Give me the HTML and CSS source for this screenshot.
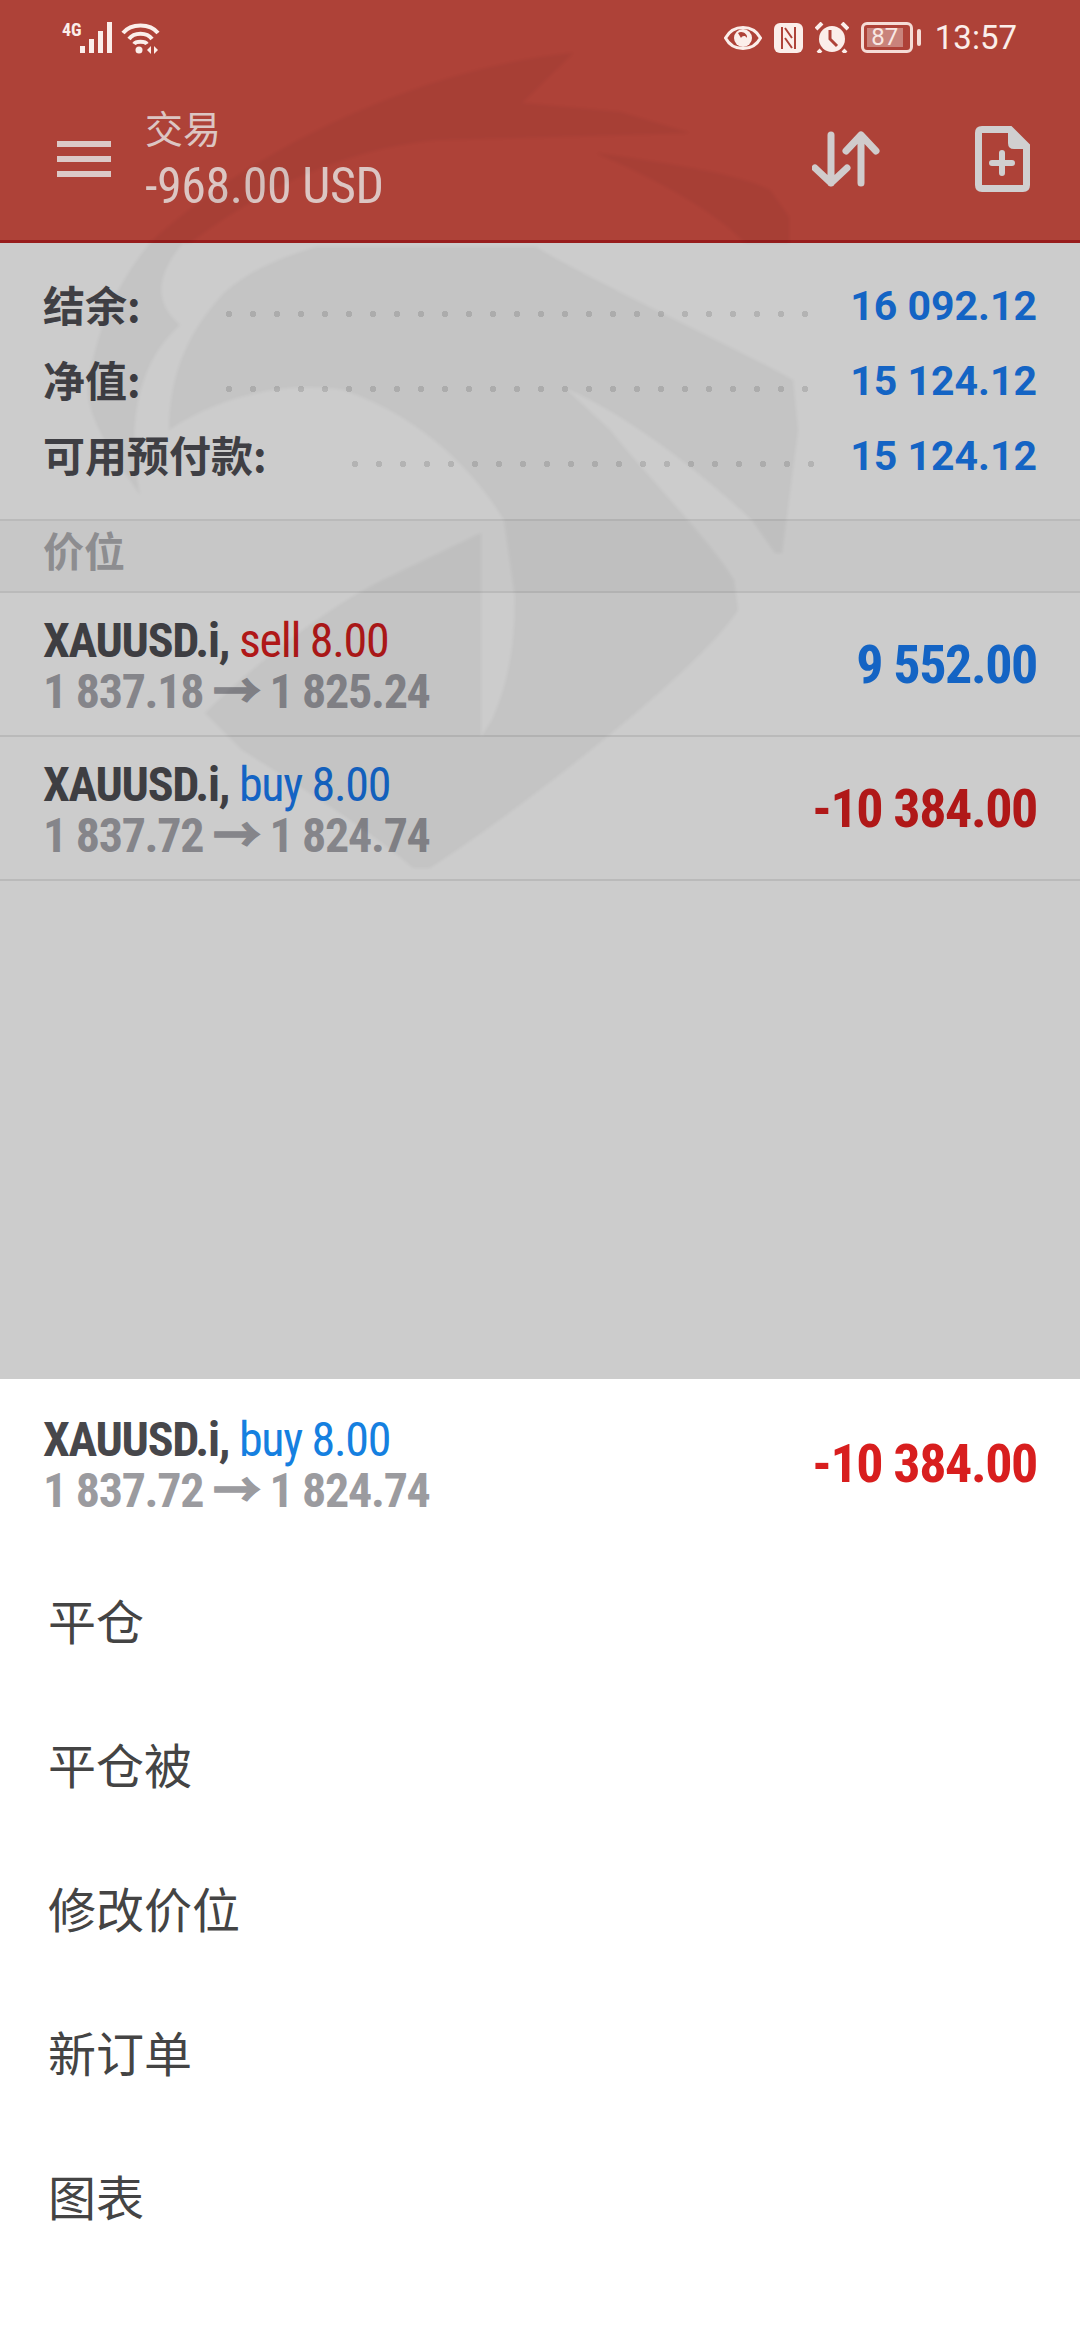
FILE: index.html
```html
<!DOCTYPE html>
<html lang="zh">
<head>
    <meta charset="UTF-8">
    <meta name="viewport" content="width=device-width, initial-scale=1.0">
    <title>交易</title>
    <link rel="stylesheet" href="styles.css">
</head>
<body>
    <div class="trade">
        <header class="top">
            <div class="status">
                <div class="status-left">
                    <span class="net">4G</span>
                    <svg class="ic-signal" width="32" height="31" viewBox="0 0 32 31" fill="#fbeeea">
                        <rect x="0" y="24" width="5" height="7"/>
                        <rect x="9" y="17" width="5" height="14"/>
                        <rect x="18" y="9" width="5" height="22"/>
                        <rect x="27" y="0" width="5" height="31"/>
                    </svg>
                    <svg class="ic-wifi" width="39" height="32" viewBox="0 0 39 32" fill="none" stroke="#fbeeea" stroke-width="4">
                        <path d="M2 11C10 1 29 1 37 11"/>
                        <path d="M8 17C13 10 26 10 31 17"/>
                        <path d="M13 22C15 19 24 19 26 22"/>
                        <circle cx="18" cy="28" r="3.500" fill="#fbeeea" stroke="none"/>
                        <path d="M30 24L26 28L30 32ZM33 24L37 28L33 32Z" fill="#fbeeea" stroke="none"/>
                    </svg>
                </div>
                <div class="status-right">
                    <svg width="38" height="26" viewBox="0 0 38 26">
                        <path d="M1.500 13C9 -1 29 -1 36.500 13C29 27 9 27 1.500 13Z" fill="none" stroke="#fbeeea" stroke-width="3"/>
                        <circle cx="19" cy="13" r="9" fill="#fbeeea"/>
                        <path d="M14 8C18 5 24 9 23 13C21 10 18 11 17 13Z" fill="#ae4238"/>
                    </svg>
                    <svg width="29" height="30" viewBox="0 0 29 30">
                        <rect width="29" height="30" rx="6" fill="#fbeeea"/>
                        <path d="M8 4V26M21 4V26M11 5L18 15M11 15L18 25" fill="none" stroke="#ae4238" stroke-width="2"/>
                    </svg>
                    <svg width="34" height="31" viewBox="0 0 34 31">
                        <circle cx="17" cy="17" r="13" fill="#fbeeea"/>
                        <path d="M1 7L7 1M33 7L27 1M6 28L3 31M28 28L31 31" stroke="#fbeeea" stroke-width="4"/>
                        <path d="M15 8V17L22 24" fill="none" stroke="#ae4238" stroke-width="3"/>
                    </svg>
                    <div class="battery">
                        <div class="battery-box">
                            <div class="battery-fill"></div>
                            <span class="battery-num">87</span>
                        </div>
                        <div class="battery-nub"></div>
                    </div>
                    <span class="clock">13:57</span>
                </div>
            </div>
            <div class="toolbar">
                <svg class="ic-menu" width="54" height="36" viewBox="0 0 54 36" fill="#dcc9c7">
                    <rect width="54" height="6"/>
                    <rect y="15" width="54" height="6"/>
                    <rect y="30" width="54" height="6"/>
                </svg>
                <div class="title">
                    <div class="title-name">交易</div>
                    <div class="title-sum">-968.00 USD</div>
                </div>
                <svg class="ic-sort" width="68" height="56" viewBox="0 0 68 56" fill="none" stroke="#d0cccc" stroke-width="7" stroke-linecap="round" stroke-linejoin="round">
                    <path d="M19 4V52M3 37L19 52L35 37"/>
                    <path d="M49 52V4M34 20L49 4L64 20"/>
                </svg>
                <svg class="ic-new" width="55" height="66" viewBox="0 0 55 66">
                    <path d="M3.500 7Q3.500 3.500 7 3.500H35L51.500 20V59Q51.500 62.500 48 62.500H7Q3.500 62.500 3.500 59Z" fill="none" stroke="#d0cfd0" stroke-width="7"/>
                    <path d="M33 2L53 21V23H39Q33 23 33 17Z" fill="#d0cfd0"/>
                    <path d="M27 27V47M17 37H37" fill="none" stroke="#d0cfd0" stroke-width="6" stroke-linecap="round"/>
                </svg>
            </div>
        </header>

        <section class="balance">
            <div class="bal-row">
                <span class="bal-label">结余:</span>
                <span class="dots"></span>
                <span class="bal-value">16 092.12</span>
            </div>
            <div class="bal-row">
                <span class="bal-label">净值:</span>
                <span class="dots"></span>
                <span class="bal-value">15 124.12</span>
            </div>
            <div class="bal-row">
                <span class="bal-label">可用预付款:</span>
                <span class="dots"></span>
                <span class="bal-value">15 124.12</span>
            </div>
        </section>

        <div class="section-head">价位</div>

        <div class="pos">
            <div class="pos-text">
                <div class="pos-line"><b>XAUUSD.i,</b> <span class="sell">sell 8.00</span></div>
                <div class="pos-price">1 837.18 <span class="arrow">→</span> 1 825.24</div>
            </div>
            <div class="pos-profit plus">9 552.00</div>
        </div>
        <div class="pos">
            <div class="pos-text">
                <div class="pos-line"><b>XAUUSD.i,</b> <span class="buy">buy 8.00</span></div>
                <div class="pos-price">1 837.72 <span class="arrow">→</span> 1 824.74</div>
            </div>
            <div class="pos-profit minus">-10 384.00</div>
        </div>

        <!-- logo watermark, sits over the whole upper part -->
        <svg class="mark" width="1080" height="1379" viewBox="0 0 1080 1379">
            <path d="M573 53L522 103L620 112L690 133L435 140C340 150 260 190 190 243H150C250 150 420 68 573 53Z"/>
            <path d="M596 153C680 165 740 175 770 190L789 217V243H745C720 215 660 180 596 153Z"/>
            <path d="M150 243H183C160 270 150 300 180 325C140 360 125 420 140 495C110 450 80 410 90 375C100 320 120 280 150 243Z"/>
            <path d="M224 293C250 270 280 258 316 247H536C590 280 740 350 793 380L798 430L782 553H775L752 520C720 490 640 420 565 388L610 430C650 480 710 540 734 580L738 610C700 670 520 810 430 868H413C370 830 290 780 242 750L205 713C270 650 340 600 389 577L481 533V737L492 720C510 680 515 640 515 597L504 520C480 480 430 420 344 390C290 380 220 395 169 430C170 370 190 330 224 293Z"/>
        </svg>
    </div>

    <div class="sheet">
        <div class="sheet-head">
            <div class="pos-text">
                <div class="pos-line"><b>XAUUSD.i,</b> <span class="buy">buy 8.00</span></div>
                <div class="pos-price">1 837.72 <span class="arrow">→</span> 1 824.74</div>
            </div>
            <div class="pos-profit minus">-10 384.00</div>
        </div>
        <div class="menu-item">平仓</div>
        <div class="menu-item">平仓被</div>
        <div class="menu-item">修改价位</div>
        <div class="menu-item">新订单</div>
        <div class="menu-item">图表</div>
    </div>
</body>
</html>
```
FILE: styles.css
```css
* {
    margin: 0;
    padding: 0;
    box-sizing: border-box;
}

body {
    width: 1080px;
    height: 2340px;
    overflow: hidden;
    background: #fff;
    font-family: "Roboto Condensed", Roboto, "Noto Sans CJK SC", sans-serif;
    display: flex;
    flex-direction: column;
}

.trade {
    position: relative;
    height: 1379px;
    background: #ccc;
    overflow: hidden;
}

.mark {
    position: absolute;
    left: 0;
    top: 0;
    fill: #000;
    fill-opacity: 0.038;
    filter: blur(1.500px);
    pointer-events: none;
}

/* header */
.top {
    height: 243px;
    background: #ae4238;
    border-bottom: 3px solid #981d1d;
}

.status {
    height: 70px;
    padding: 22px 63px 0 62px;
    display: flex;
    justify-content: space-between;
    align-items: flex-start;
}

.status-left {
    display: flex;
    align-items: flex-start;
}

.net {
    font-size: 18px;
    line-height: 15px;
    font-weight: 700;
    color: #fbeeea;
    width: 18px;
}

.ic-wifi {
    margin-left: 9px;
}

.status-right {
    display: flex;
    align-items: center;
    gap: 12px;
}

.battery {
    display: flex;
    align-items: center;
    gap: 4px;
}

.battery-box {
    position: relative;
    width: 52px;
    height: 31px;
    border: 3px solid #f5dcd6;
    border-radius: 6px;
    padding: 3px;
}

.battery-fill {
    width: 36px;
    height: 100%;
    background: #c9837b;
}

.battery-num {
    position: absolute;
    left: 0;
    right: 4px;
    top: 0;
    text-align: center;
    font-family: Roboto, sans-serif;
    font-size: 24px;
    line-height: 25px;
    color: #f8e8e4;
}

.battery-nub {
    width: 4px;
    height: 17px;
    border-radius: 2px;
    background: #f5dcd6;
}

.clock {
    margin-left: 2px;
    font-family: Roboto, sans-serif;
    font-size: 33px;
    line-height: 31px;
    color: #fbeeea;
}

.toolbar {
    height: 170px;
    padding: 0 50px 0 57px;
    display: flex;
    align-items: center;
}

.ic-menu {
    margin-top: 8px;
    flex: none;
}

.title {
    margin-left: 34px;
    flex: 1;
    margin-top: 6px;
}

.title-name {
    font-family: "Noto Sans CJK SC", sans-serif;
    font-size: 38px;
    line-height: 54px;
    color: #dcc6c3;
}

.title-sum {
    margin-top: 1px;
    font-size: 50px;
    line-height: 62px;
    letter-spacing: -0.4px;
    color: #dcc6c3;
}

.ic-sort {
    margin-top: 8px;
    margin-right: 95px;
}

.ic-new {
    margin-top: 8px;
}

/* balance */
.balance {
    height: 276px;
    padding: 25px 43px 0;
}

.bal-row {
    height: 75px;
    display: flex;
    align-items: center;
}

.bal-label {
    margin-top: -4px;
    font-family: "Noto Sans CJK SC", sans-serif;
    font-size: 42px;
    font-weight: 700;
    color: #3f3f44;
}

.dots {
    flex: 1;
    height: 8px;
    margin: 16px 32px 0 76px;
    background: radial-gradient(circle, #b3b3b3 3px, transparent 3.500px) left center / 24px 8px repeat-x;
}

.bal-value {
    font-family: Roboto, sans-serif;
    font-size: 41px;
    font-weight: 700;
    color: #1464c4;
}

.section-head {
    height: 74px;
    padding-left: 43px;
    border-top: 2px solid #bababa;
    border-bottom: 2px solid #bababa;
    background: #c7c7c7;
    font-family: "Noto Sans CJK SC", sans-serif;
    font-size: 41px;
    font-weight: 700;
    line-height: 57px;
    color: #8d8d90;
}

/* positions */
.pos {
    height: 144px;
    padding: 0 43px;
    border-bottom: 2px solid #bababa;
    display: flex;
    justify-content: space-between;
    align-items: center;
}

.pos-text {
    padding-top: 3px;
}

.pos-line {
    font-size: 48px;
    line-height: 51px;
    letter-spacing: -1.3px;
    color: #3e3e42;
}

.pos-line b {
    font-weight: 700;
}

.sell {
    color: #b01818;
}

.buy {
    color: #1464c4;
}

.pos-price {
    font-size: 48px;
    line-height: 51px;
    letter-spacing: -1.3px;
    font-weight: 700;
    color: #85858a;
}

.arrow {
    -webkit-text-stroke: 1.5px currentColor;
}

.pos-profit {
    font-size: 54px;
    letter-spacing: -1.4px;
    font-weight: 700;
}

.plus {
    color: #1464c4;
}

.minus {
    color: #b01818;
}

/* bottom sheet */
.sheet {
    flex: 1;
    background: #fff;
}

.sheet-head {
    height: 168px;
    padding: 0 43px;
    display: flex;
    justify-content: space-between;
    align-items: center;
}

.sheet-head .pos-line {
    color: #47474b;
}

.sheet-head .buy {
    color: #1580e0;
}

.sheet-head .pos-price {
    color: #9b9b9f;
}

.sheet-head .minus {
    color: #d81e1e;
}

.menu-item {
    height: 144px;
    padding-left: 48px;
    font-family: "Noto Sans CJK SC", sans-serif;
    font-size: 48px;
    line-height: 144px;
    color: #444;
}
```
